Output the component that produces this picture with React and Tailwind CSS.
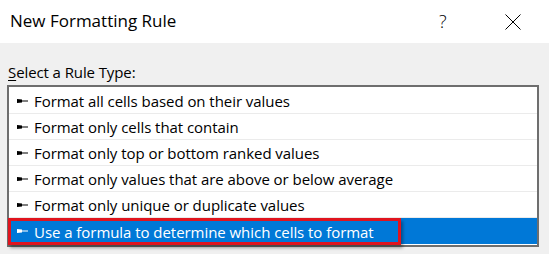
import React from "react";

const rules = [
  "Format all cells based on their values",
  "Format only cells that contain",
  "Format only top or bottom ranked values",
  "Format only values that are above or below average",
  "Format only unique or duplicate values",
  "Use a formula to determine which cells to format",
];

const Pin = ({ color }) => (
  <svg width="12" height="6" viewBox="0 0 12 6" className="shrink-0">
    <path d="M0 1 L5 1.5 L5 4.5 L0 5 Z" fill={color} />
    <rect x="5" y="2.5" width="6" height="1" fill={color} />
  </svg>
);

const App = () => {
  return (
    <div
      className="w-[549px] h-[254px] overflow-hidden bg-[#f0f0f0] text-[#000]"
      style={{ fontFamily: '"Open Sans", "Noto Sans", sans-serif' }}
    >
      {/* title bar */}
      <div className="h-[43px] bg-white flex items-center pl-[10px]">
        <div className="text-[17px] flex-1 pb-[1px]">New Formatting Rule</div>
        <div className="text-[18px] font-light w-[66px] text-left pb-[1px]">?</div>
        <div className="w-[44px] flex justify-start">
          <svg width="16" height="16" viewBox="0 0 16 16">
            <path d="M0.5 0.5 L15.5 15.5 M15.5 0.5 L0.5 15.5" stroke="#000" strokeWidth="1" />
          </svg>
        </div>
      </div>

      {/* body */}
      <div className="pt-[19px] px-[7px]">
        <div className="text-[15px] pl-[1px] leading-[20px] tracking-[-0.1px]">
          <span className="underline underline-offset-2">S</span>elect a Rule Type:
        </div>
        <div className="mt-[3px] w-[532px] border-2 border-[#6e6e6e] bg-white pt-[1px] pb-[1px]">
          {rules.map((r, i) => {
            const sel = i === rules.length - 1;
            if (sel) {
              return (
                <div key={i} className="relative h-[26px] bg-[#0078d7] text-white flex items-center gap-[5px] pl-[8px]">
                  <Pin color="#fff" />
                  <span className="text-[15px] tracking-[-0.05px] pt-[2px]">{r}</span>
                  <div className="absolute left-[-1px] top-[0px] w-[393px] h-[27px] border-[3px] border-[#e0141e] shadow-[2px_3px_3px_rgba(0,0,0,0.35)]" />
                </div>
              );
            }
            return (
              <div
                key={i}
                className="h-[26px] border-b border-[#ebebeb] flex items-center gap-[5px] pl-[8px]"
              >
                <Pin color="#000" />
                <span className="text-[15px] tracking-[-0.05px] pt-[2px]">{r}</span>
              </div>
            );
          })}
        </div>
      </div>
    </div>
  );
};

export default App;
